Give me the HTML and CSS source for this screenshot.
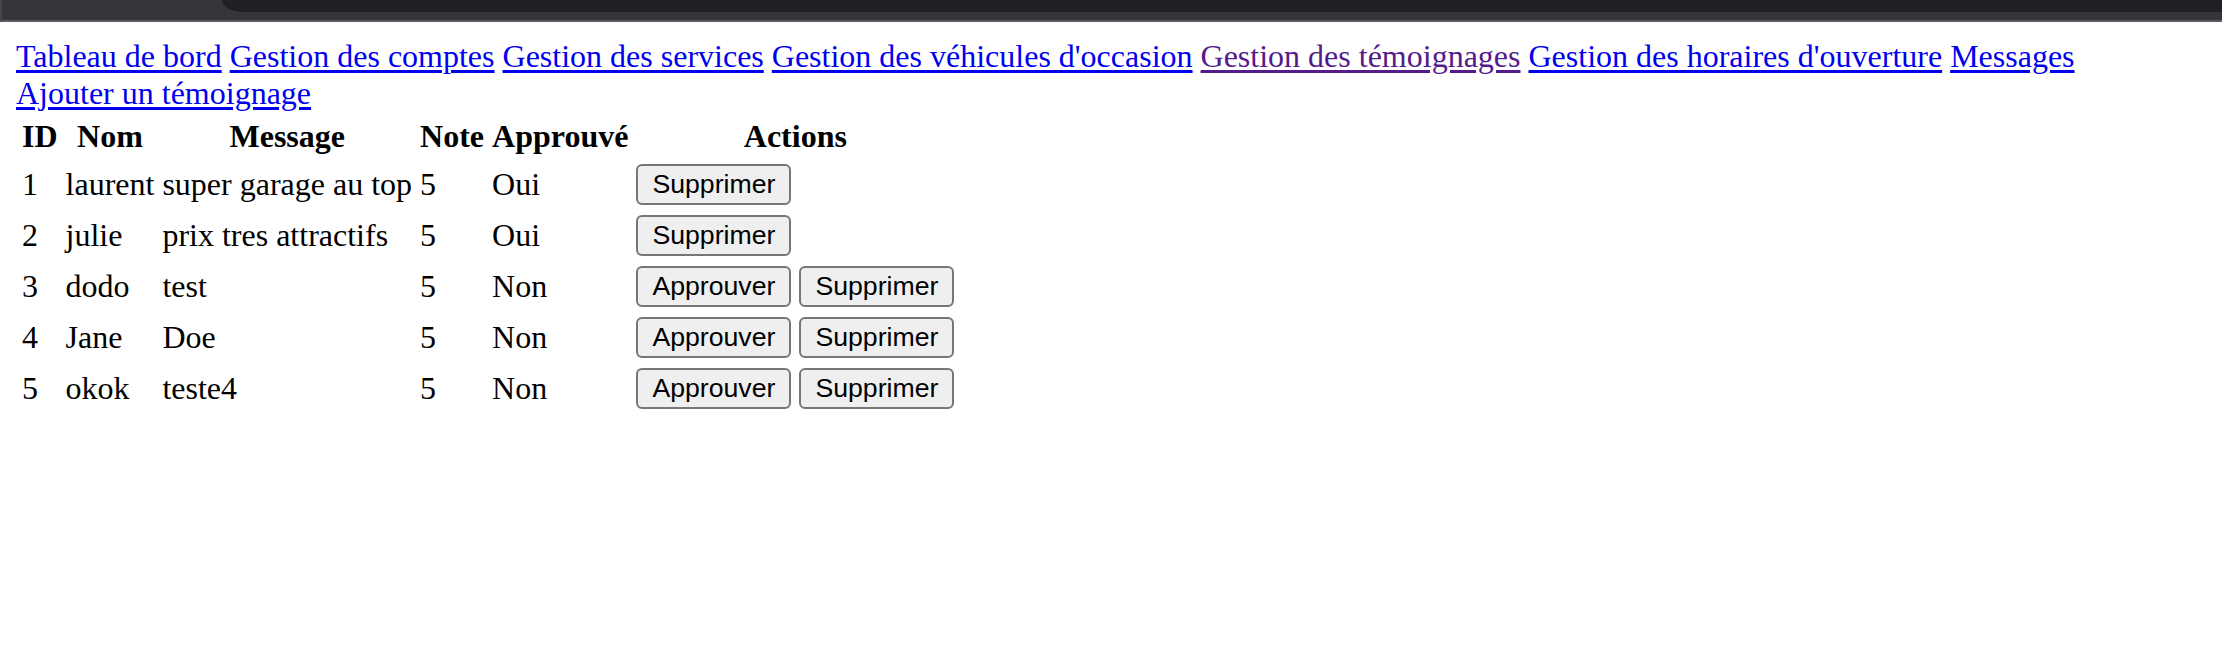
FILE: index.html
```html
<!DOCTYPE html>
<html lang="fr">
<head>
<meta charset="utf-8">
<title>Gestion des témoignages</title>
<link rel="stylesheet" href="styles.css">
</head>
<body>
<div class="chrome"><div class="chrome-tab"></div></div>
<div class="page">
  <nav class="nav">
    <a href="#" class="link">Tableau de bord</a>
    <a href="#" class="link">Gestion des comptes</a>
    <a href="#" class="link">Gestion des services</a>
    <a href="#" class="link">Gestion des véhicules d'occasion</a>
    <a href="#" class="link visited">Gestion des témoignages</a>
    <a href="#" class="link">Gestion des horaires d'ouverture</a>
    <a href="#" class="link">Messages</a>
  </nav>
  <div class="add"><a href="#" class="link">Ajouter un témoignage</a></div>
  <table class="table">
    <thead>
      <tr>
        <th>ID</th>
        <th>Nom</th>
        <th>Message</th>
        <th>Note</th>
        <th>Approuvé</th>
        <th>Actions</th>
      </tr>
    </thead>
    <tbody>
      <tr>
        <td>1</td><td>laurent</td><td>super garage au top</td><td>5</td><td>Oui</td>
        <td><button class="btn">Supprimer</button></td>
      </tr>
      <tr>
        <td>2</td><td>julie</td><td>prix tres attractifs</td><td>5</td><td>Oui</td>
        <td><button class="btn">Supprimer</button></td>
      </tr>
      <tr>
        <td>3</td><td>dodo</td><td>test</td><td>5</td><td>Non</td>
        <td><button class="btn">Approuver</button> <button class="btn">Supprimer</button></td>
      </tr>
      <tr>
        <td>4</td><td>Jane</td><td>Doe</td><td>5</td><td>Non</td>
        <td><button class="btn">Approuver</button> <button class="btn">Supprimer</button></td>
      </tr>
      <tr>
        <td>5</td><td>okok</td><td>teste4</td><td>5</td><td>Non</td>
        <td><button class="btn">Approuver</button> <button class="btn">Supprimer</button></td>
      </tr>
    </tbody>
  </table>
</div>
</body>
</html>
```

FILE: styles.css
```css
html, body {
  margin: 0;
  padding: 0;
  background: #ffffff;
}

body {
  font-family: "Liberation Serif", "Times New Roman", serif;
  font-size: 32px;
  color: #000000;
}

.chrome {
  height: 20px;
  background: #35363a;
  border-bottom: 2px solid #5c5d60;
  border-left: 2px solid #47484b;
  display: flex;
  justify-content: flex-end;
}

.chrome-tab {
  width: calc(100% - 220px);
  height: 12px;
  background: #202124;
  border-bottom-left-radius: 22px 12px;
}

.page {
  margin: 16px;
}

.link {
  color: #0000ee;
  text-decoration: underline;
  text-decoration-thickness: 3px;
  text-underline-offset: 3px;
}

.link.visited {
  color: #551a8b;
}

.table {
  border-spacing: 4px;
}

.table th,
.table td {
  padding: 2px;
}

.table th {
  font-weight: bold;
  text-align: center;
}

.table td {
  text-align: left;
  height: 43px;
}

.btn {
  font-family: "Liberation Sans", Arial, sans-serif;
  font-size: 26.67px;
  height: 41px;
  padding: 0 14px;
  margin: 0;
  border: 2px solid #767676;
  border-radius: 6px;
  background: #efefef;
  color: #000000;
  box-sizing: border-box;
}
```
